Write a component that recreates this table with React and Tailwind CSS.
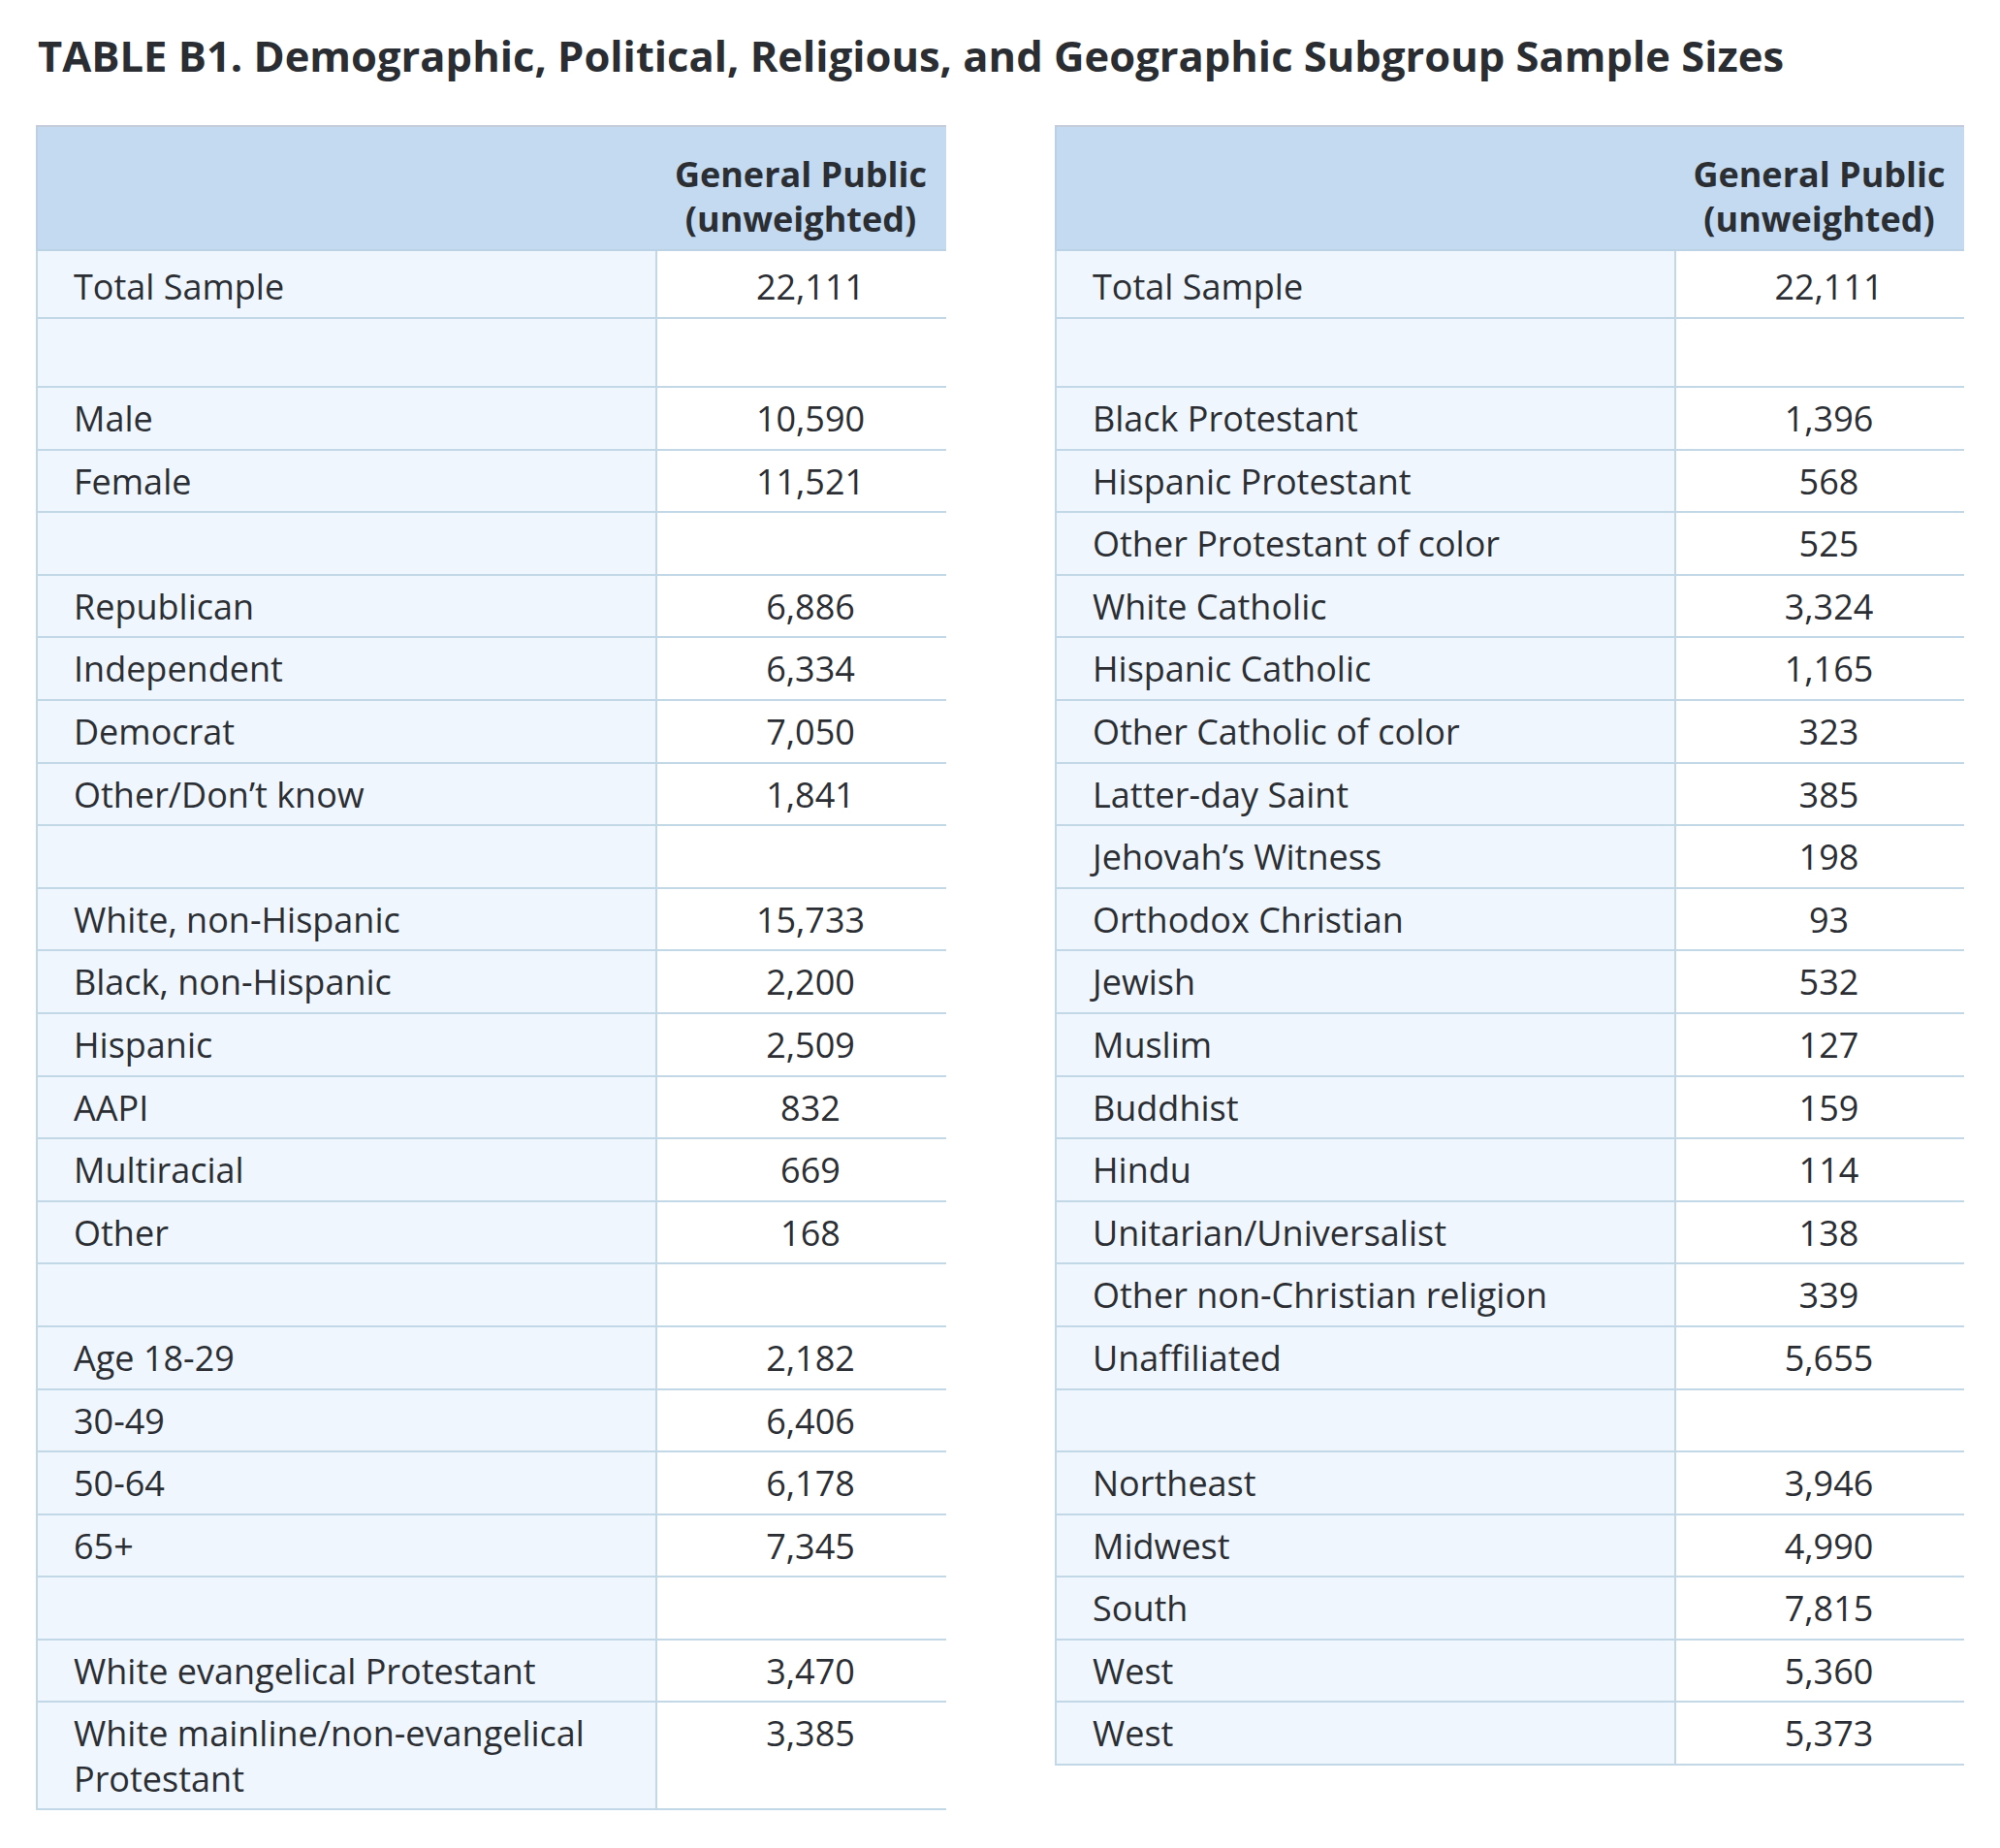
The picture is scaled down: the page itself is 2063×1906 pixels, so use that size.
import React from "react";

const left = [
  ["Total Sample", "22,111", "first"],
  ["", "", "second"],
  ["Male", "10,590"],
  ["Female", "11,521"],
  ["", ""],
  ["Republican", "6,886"],
  ["Independent", "6,334"],
  ["Democrat", "7,050"],
  ["Other/Don’t know", "1,841"],
  ["", ""],
  ["White, non-Hispanic", "15,733"],
  ["Black, non-Hispanic", "2,200"],
  ["Hispanic", "2,509"],
  ["AAPI", "832"],
  ["Multiracial", "669"],
  ["Other", "168"],
  ["", ""],
  ["Age 18-29", "2,182"],
  ["30-49", "6,406"],
  ["50-64", "6,178"],
  ["65+", "7,345"],
  ["", ""],
  ["White evangelical Protestant", "3,470"],
  ["White mainline/non-evangelical Protestant", "3,385"],
];

const right = [
  ["Total Sample", "22,111", "first"],
  ["", "", "second"],
  ["Black Protestant", "1,396"],
  ["Hispanic Protestant", "568"],
  ["Other Protestant of color", "525"],
  ["White Catholic", "3,324"],
  ["Hispanic Catholic", "1,165"],
  ["Other Catholic of color", "323"],
  ["Latter-day Saint", "385"],
  ["Jehovah’s Witness", "198"],
  ["Orthodox Christian", "93"],
  ["Jewish", "532"],
  ["Muslim", "127"],
  ["Buddhist", "159"],
  ["Hindu", "114"],
  ["Unitarian/Universalist", "138"],
  ["Other non-Christian religion", "339"],
  ["Unaffiliated", "5,655"],
  ["", ""],
  ["Northeast", "3,946"],
  ["Midwest", "4,990"],
  ["South", "7,815"],
  ["West", "5,360"],
  ["West", "5,373"],
];

function Row({ label, value, kind }) {
  let rowCls = "min-h-[62.6px] pt-[9px] pb-[7px]";
  if (kind === "first") rowCls = "h-[68px] pt-[14px]";
  if (kind === "second") rowCls = "h-[69px] pt-[14px]";
  return (
    <div className="flex border-b-2 border-[#c3d8e6]">
      <div
        className={`w-[639px] shrink-0 border-l-2 border-[#c3d8e6] bg-[#f0f6fd] pl-[37px] pr-[20px] ${rowCls}`}
      >
        {label}
      </div>
      <div
        className={`flex-1 border-l-2 border-[#c3d8e6] bg-white pl-[18px] text-center ${rowCls}`}
      >
        {value}
      </div>
    </div>
  );
}

function Table({ rows, width }) {
  return (
    <div className={`${width} shrink-0`}>
      <div className="flex h-[130px] border-t-2 border-b-2 border-t-[#c4cbdb] border-b-[#bcd3e6] border-l-2 border-l-[#bcd0e4] bg-[#c4daf0]">
        <div className="w-[637px] shrink-0" />
        <div className="flex-1 pt-[26px] text-center font-bold">
          General Public
          <br />
          (unweighted)
        </div>
      </div>
      {rows.map((r, i) => (
        <Row key={i} label={r[0]} value={r[1]} kind={r[2]} />
      ))}
    </div>
  );
}

export default function App() {
  return (
    <div
      className="min-h-[1906px] bg-white pl-[37px] pt-[29px] text-[#2b2e33]"
      style={{ fontFamily: '"Open Sans", sans-serif' }}
    >
      <h1 className="pl-[2px] text-[43.5px] font-bold leading-[57px] text-[#2a2d31]">
        TABLE B1. Demographic, Political, Religious, and Geographic Subgroup Sample Sizes
      </h1>
      <div className="mt-[43px] flex gap-[112px] text-[36px] leading-[46.4px]">
        <Table rows={left} width="w-[939px]" />
        <Table rows={right} width="w-[938px]" />
      </div>
    </div>
  );
}
